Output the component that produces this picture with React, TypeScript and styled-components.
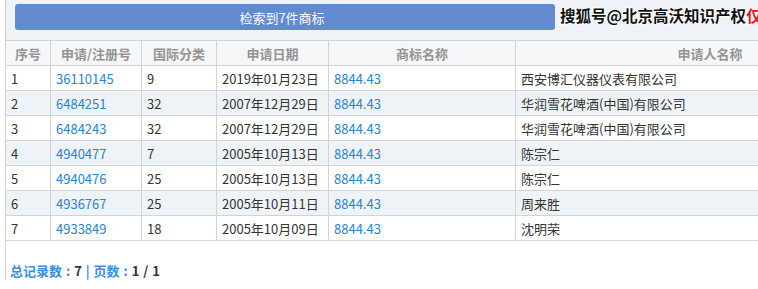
import React from "react";
import styled, { createGlobalStyle } from "styled-components";

const Global = createGlobalStyle`
  html, body { margin: 0; padding: 0; overflow: hidden; background: #fff; }
  body { font-family: "Noto Sans CJK SC", "Noto Sans", sans-serif; font-size: 13px; color: #333; }
`;

const Page = styled.div`
  position: relative;
  width: 900px;
  margin-left: 5px;
  border-left: 1px solid #d3d3d3;
`;

const TopPanel = styled.div`
  height: 40px;
  background: #eff3f7;
  padding: 4px 0 0 9px;
  box-sizing: border-box;
`;

const ResultBar = styled.div`
  width: 540px;
  height: 26px;
  border-radius: 3px;
  background: #6389ce;
  color: #fff;
  display: flex;
  align-items: center;
  justify-content: center;
  font-size: 13px;
  padding-right: 6px;
  box-sizing: border-box;
`;

const Watermark = styled.div`
  position: absolute;
  left: 554px;
  top: 4px;
  font-size: 15.5px;
  font-weight: 700;
  white-space: nowrap;
  color: #111;
  text-shadow: 1px 0 0 #fff, -1px 0 0 #fff, 0 1px 0 #fff, 0 -1px 0 #fff;
  line-height: 22px;
`;

const Red = styled.span`
  color: #e8141b;
`;

const Table = styled.table`
  border-collapse: collapse;
  width: 900px;
  table-layout: fixed;
  margin-left: -1px;
`;

const Th = styled.th<{ $w?: number }>`
  width: ${(p) => (p.$w ? `${p.$w}px` : "auto")};
  height: 24px;
  padding: 0;
  background: #f5f6f7;
  border: 1px solid #d3d3d3;
  color: #949494;
  font-weight: 700;
  font-size: 13px;
  text-align: center;
`;

const Tr = styled.tr<{ $alt: boolean }>`
  background: ${(p) => (p.$alt ? "#eef3f8" : "#fff")};
`;

const Td = styled.td<{ $link?: boolean }>`
  height: 24px;
  padding: 0 0 0 5px;
  border: 1px solid #d3d3d3;
  color: ${(p) => (p.$link ? "#2685d0" : "#333")};
  font-size: 13px;
  white-space: nowrap;
  overflow: hidden;
`;

const Footer = styled.div`
  margin-top: 20px;
  padding-left: 4px;
  font-size: 13px;
  font-weight: 700;
  color: #3b8fdc;
  word-spacing: 1px;
`;

const Strong = styled.span`
  color: #333;
`;

const rows = [
  ["1", "36110145", "9", "2019年01月23日", "8844.43", "西安博汇仪器仪表有限公司"],
  ["2", "6484251", "32", "2007年12月29日", "8844.43", "华润雪花啤酒(中国)有限公司"],
  ["3", "6484243", "32", "2007年12月29日", "8844.43", "华润雪花啤酒(中国)有限公司"],
  ["4", "4940477", "7", "2005年10月13日", "8844.43", "陈宗仁"],
  ["5", "4940476", "25", "2005年10月13日", "8844.43", "陈宗仁"],
  ["6", "4936767", "25", "2005年10月11日", "8844.43", "周来胜"],
  ["7", "4933849", "18", "2005年10月09日", "8844.43", "沈明荣"],
];

export default function App() {
  return (
    <>
      <Global />
      <Page>
        <TopPanel>
          <ResultBar>检索到7件商标</ResultBar>
        </TopPanel>
        <Watermark>
          搜狐号@北京高沃知识产权<Red>仅</Red>
        </Watermark>
        <Table>
          <thead>
            <tr>
              <Th $w={44}>序号</Th>
              <Th $w={90}>申请/注册号</Th>
              <Th $w={74}>国际分类</Th>
              <Th $w={111}>申请日期</Th>
              <Th $w={186}>商标名称</Th>
              <Th>申请人名称</Th>
            </tr>
          </thead>
          <tbody>
            {rows.map((r, i) => (
              <Tr key={r[0]} $alt={i % 2 === 1}>
                <Td>{r[0]}</Td>
                <Td $link>{r[1]}</Td>
                <Td>{r[2]}</Td>
                <Td>{r[3]}</Td>
                <Td $link>{r[4]}</Td>
                <Td>{r[5]}</Td>
              </Tr>
            ))}
          </tbody>
        </Table>
        <Footer>
          总记录数 : <Strong>7</Strong> | 页数 : <Strong>1 / 1</Strong>
        </Footer>
      </Page>
    </>
  );
}
